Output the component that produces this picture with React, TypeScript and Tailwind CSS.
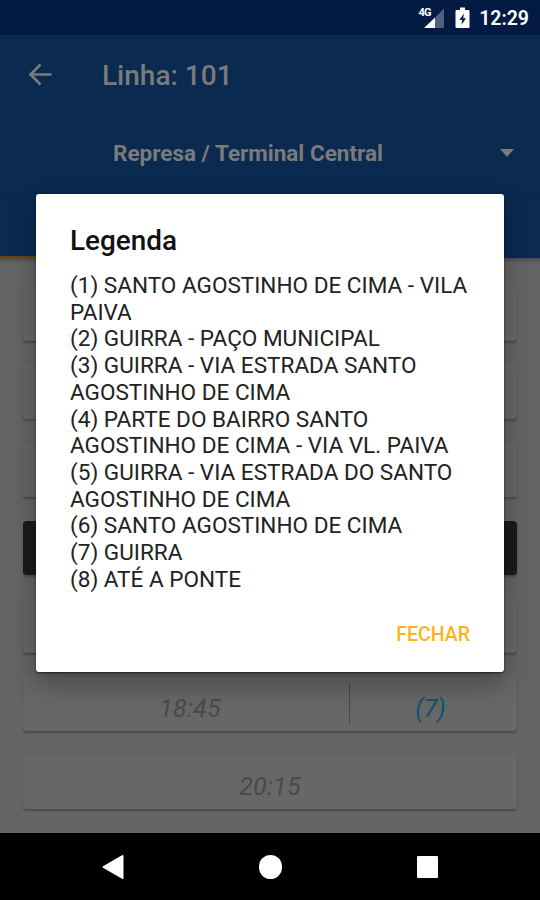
import React from "react";

const legend = [
  "(1) SANTO AGOSTINHO DE CIMA - VILA",
  "PAIVA",
  "(2) GUIRRA - PAÇO MUNICIPAL",
  "(3) GUIRRA - VIA ESTRADA SANTO",
  "AGOSTINHO DE CIMA",
  "(4) PARTE DO BAIRRO SANTO",
  "AGOSTINHO DE CIMA - VIA VL. PAIVA",
  "(5) GUIRRA - VIA ESTRADA DO SANTO",
  "AGOSTINHO DE CIMA",
  "(6) SANTO AGOSTINHO DE CIMA",
  "(7) GUIRRA",
  "(8) ATÉ A PONTE",
];

type Departure = { time?: string; note?: string; active?: boolean };

const departures: Departure[] = [
  {},
  {},
  {},
  { active: true },
  {},
  { time: "18:45", note: "(7)" },
  { time: "20:15" },
];

const StatusBar: React.FC = () => (
  <div className="flex h-[35px] shrink-0 items-center justify-end bg-[#031b43] pr-[11px] text-white">
    <svg className="h-[26px] w-[28px]" viewBox="0 0 28 26" fill="none">
      <text x="1.500" y="11" fill="#fff" fontSize="11" fontWeight="700" letterSpacing="-0.700" fontFamily="Roboto, sans-serif">
        4G
      </text>
      <path d="M18 12.500 27 3.500v19.500h-9Z" fill="#4d607d" />
      <path d="M7 23 18 12.500v10.500Z" fill="#fff" />
    </svg>
    <svg className="ml-[10px] h-[22px] w-[15px]" viewBox="0 0 15 22">
      <path
        fillRule="evenodd"
        d="M5 .5h5V3h3.200c.8 0 1.300.5 1.300 1.300v15.400c0 .8-.5 1.300-1.300 1.300H1.800c-.8 0-1.300-.5-1.300-1.300V4.300C.5 3.500 1 3 1.800 3H5ZM9 6.500 4.400 13h2.800L6.400 18 11 11.300H8.200Z"
        fill="#fff"
      />
    </svg>
    <span className="ml-[9px] pt-[3px] text-[19.500px] leading-none font-semibold">12:29</span>
  </div>
);

const Header: React.FC = () => (
  <header className="flex h-[223px] shrink-0 flex-col bg-[#0a2a50] text-[#7b7b7b]">
    <div className="flex h-[79px] items-center pl-[28px]">
      <svg className="h-[24px] w-[24px]" viewBox="0 0 24 24" fill="none" stroke="currentColor" strokeWidth="2.700">
        <path d="M23.500 11.500H3M12.500 1.500l-10 10 10 10" />
      </svg>
      <h1 className="ml-[50px] pt-[3px] text-[28px] leading-none font-medium whitespace-nowrap">Linha: 101</h1>
    </div>
    <div className="flex h-[78px] items-center justify-between pr-[26px] pl-[113px]">
      <span className="pt-px text-[22.500px] leading-none font-bold whitespace-nowrap">Represa / Terminal Central</span>
      <svg className="h-[8px] w-[14px]" viewBox="0 0 14 8" fill="currentColor">
        <path d="M0 0h14L7 8Z" />
      </svg>
    </div>
    <div className="flex flex-1 items-end border-t border-[#092648]">
      <div className="h-[2px] w-1/2 bg-[#68470b]" />
    </div>
  </header>
);

const DepartureCard: React.FC<Departure> = ({ time, note, active }) => (
  <div
    className={`flex h-[54px] shrink-0 items-center rounded-[4px] text-[25px] italic shadow-[0_2px_2px_0_rgba(0,0,0,0.25)] ${
      active ? "bg-[#1a1a1a]" : "bg-[#676767]"
    }`}
  >
    <span className={`flex-1 pt-[10px] text-center tracking-[0.2px] text-[#494949] ${note ? "pl-[8px]" : ""}`}>{time}</span>
    {note && (
      <div className="flex h-[42px] w-[168px] items-center justify-center border-l border-[#484848] pt-[10px] text-[#105270]">
        <span className="pr-[6px]">{note}</span>
      </div>
    )}
  </div>
);

const LegendDialog: React.FC = () => (
  <div
    role="dialog"
    aria-label="Legenda"
    className="absolute top-[194px] left-[36px] flex h-[478px] w-[468px] flex-col rounded-[3px] bg-white pr-[34px] pl-[34px] shadow-[0_1px_2px_rgba(0,0,0,0.6),0_12px_26px_rgba(0,0,0,0.3)]"
  >
    <h2 className="mt-[31px] text-[27.900px] leading-[32px] font-medium text-[#111]">Legenda</h2>
    <div className="mt-[16px] text-[22.550px] leading-[26.700px] text-[#222]">
      {legend.map((line, i) => (
        <p key={i} className="whitespace-nowrap">
          {line}
        </p>
      ))}
    </div>
    <button className="mt-[32px] self-end text-[19.500px] leading-[20px] font-medium text-[#ffb31a]">FECHAR</button>
  </div>
);

const NavBar: React.FC = () => (
  <nav className="flex h-[67px] shrink-0 items-center bg-black pl-[102px] text-white">
    <svg className="h-[26px] w-[22px]" viewBox="0 0 22 26" fill="currentColor">
      <path d="M1 12.200 20 1.200q1.500-.8 1.500 1v21.600q0 1.800-1.500 1L1 13.800q-1.200-.8 0-1.600Z" />
    </svg>
    <div className="ml-[135px] h-[24px] w-[23px] rounded-full bg-white" />
    <div className="ml-[135px] h-[22px] w-[21px] rounded-[1px] bg-white" />
  </nav>
);

export default function App() {
  return (
    <div className="relative flex h-[900px] w-[540px] flex-col overflow-hidden bg-[#646464] font-['Roboto',sans-serif]">
      <StatusBar />
      <Header />
      <div className="h-[5px] shrink-0 bg-gradient-to-b from-[#4c4c4c] to-[#646464]" />
      <main className="flex flex-1 flex-col gap-[24px] overflow-hidden px-[23px] pt-[24px]">
        {departures.map((d, i) => (
          <DepartureCard key={i} {...d} />
        ))}
      </main>
      <NavBar />
      <LegendDialog />
    </div>
  );
}
